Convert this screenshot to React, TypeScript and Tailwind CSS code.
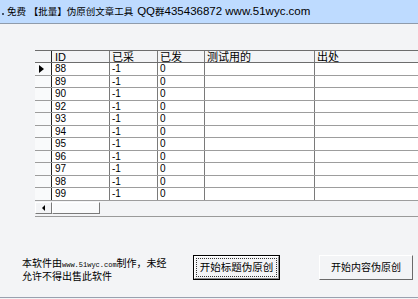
import React from 'react';

const rows = ['88', '89', '90', '92', '93', '94', '95', '96', '97', '98', '99'];

function TitleBar() {
    return (
        <div className="h-[24px] shrink-0 bg-blue-200 border-b border-b-[#8f9bab] flex items-center pl-[2px]">
            <span className="w-[2px] h-[2px] bg-slate-600 mr-[3px] mt-[4px]" />
            <span className="leading-none whitespace-nowrap flex items-center">
                <span className="text-[9.5px]">免费 【批量】伪原创文章工具</span>
                <span className="text-[11.5px] ml-[4px]">QQ</span>
                <span className="text-[9.5px]">群</span>
                <span className="text-[11.5px]">435436872 www.51wyc.com</span>
            </span>
        </div>
    );
}

export default function App() {
    return (
        <div className="w-[418px] h-[299px] overflow-hidden bg-gray-100 text-black flex flex-col font-['Liberation_Sans','Noto_Sans_CJK_SC',sans-serif]">
            <TitleBar />

            {/* data grid */}
            <div className="ml-[35px] mt-[26px] w-[420px] shrink-0 border-t border-[#6d6d6d] border-b border-b-[#9a9a9a]">
                <div className="flex h-[12px] text-[11px] leading-[12px] border-b border-[#6d6d6d]">
                    <div className="w-[17px] border-r border-[#222]" />
                    <div className="w-[58px] pl-[3px] border-r border-[#7a7a7a]">ID</div>
                    <div className="w-[48px] pl-[2px] border-r border-[#7a7a7a]">已采</div>
                    <div className="w-[47px] pl-[2px] border-r border-[#7a7a7a]">已发</div>
                    <div className="w-[110px] pl-[2px] border-r border-[#7a7a7a]">测试用的</div>
                    <div className="flex-1 pl-[2px]">出处</div>
                </div>
                {rows.map((id, i) => (
                    <div key={id} className="flex h-[12.5px] text-[10px] leading-[11px] border-b border-[#9d9d9d]">
                        <div className="w-[17px] border-r border-[#222] bg-gray-50 flex items-center pl-[4px]">
                            {i === 0 && (
                                <svg width="5" height="8" viewBox="0 0 5 8">
                                    <path d="M0 0 L5 4 L0 8 Z" fill="#000" />
                                </svg>
                            )}
                        </div>
                        <div className="w-[58px] pl-[3px] bg-white border-r border-[#7a7a7a]">{id}</div>
                        <div className="w-[48px] pl-[2px] bg-white border-r border-[#7a7a7a]">-1</div>
                        <div className="w-[47px] pl-[2px] bg-white border-r border-[#7a7a7a]">0</div>
                        <div className="w-[110px] bg-white border-r border-[#7a7a7a]" />
                        <div className="flex-1 bg-white" />
                    </div>
                ))}
                {/* horizontal scrollbar */}
                <div className="flex h-[15px] items-center">
                    <div className="w-[17px] h-[12px] border border-[#7a7a7a] border-t-white border-l-white flex items-center justify-center">
                        <svg width="3" height="6" viewBox="0 0 3 6">
                            <path d="M3 0 L0 3 L3 6 Z" fill="#000" />
                        </svg>
                    </div>
                    <div className="w-[48px] h-[12px] border border-[#7a7a7a] border-t-white border-l-white bg-gray-50" />
                </div>
            </div>

            {/* bottom area */}
            <div className="flex items-center mt-[38px] h-[26px] shrink-0">
                <div className="ml-[22px] w-[160px] text-[10px] leading-[11px] mt-[4px]">
                    <div className="whitespace-nowrap">
                        本软件由<span className="text-[7px] font-['Liberation_Mono',monospace]">www.51wyc.com</span>制作，未经
                    </div>
                    <div className="whitespace-nowrap">允许不得出售此软件</div>
                </div>
                <div className="ml-[11px] w-[87px] h-[25px] border border-black flex">
                    <div className="flex-1 border border-white border-r-[#8a8a8a] border-b-[#8a8a8a] bg-gray-100 flex items-center justify-center p-[1px]">
                        <div className="w-full h-full border border-dotted border-[#333] flex items-center justify-center text-[10.5px]">
                            开始标题伪原创
                        </div>
                    </div>
                </div>
                <div className="ml-[39px] w-[94px] h-[25px] border border-white border-r-[#6a6a6a] border-b-[#6a6a6a] bg-gray-100 flex items-center justify-center text-[10px]">
                    开始内容伪原创
                </div>
            </div>

            <div className="mt-auto mb-[1px] h-[1px] bg-gray-400" />
        </div>
    );
}
